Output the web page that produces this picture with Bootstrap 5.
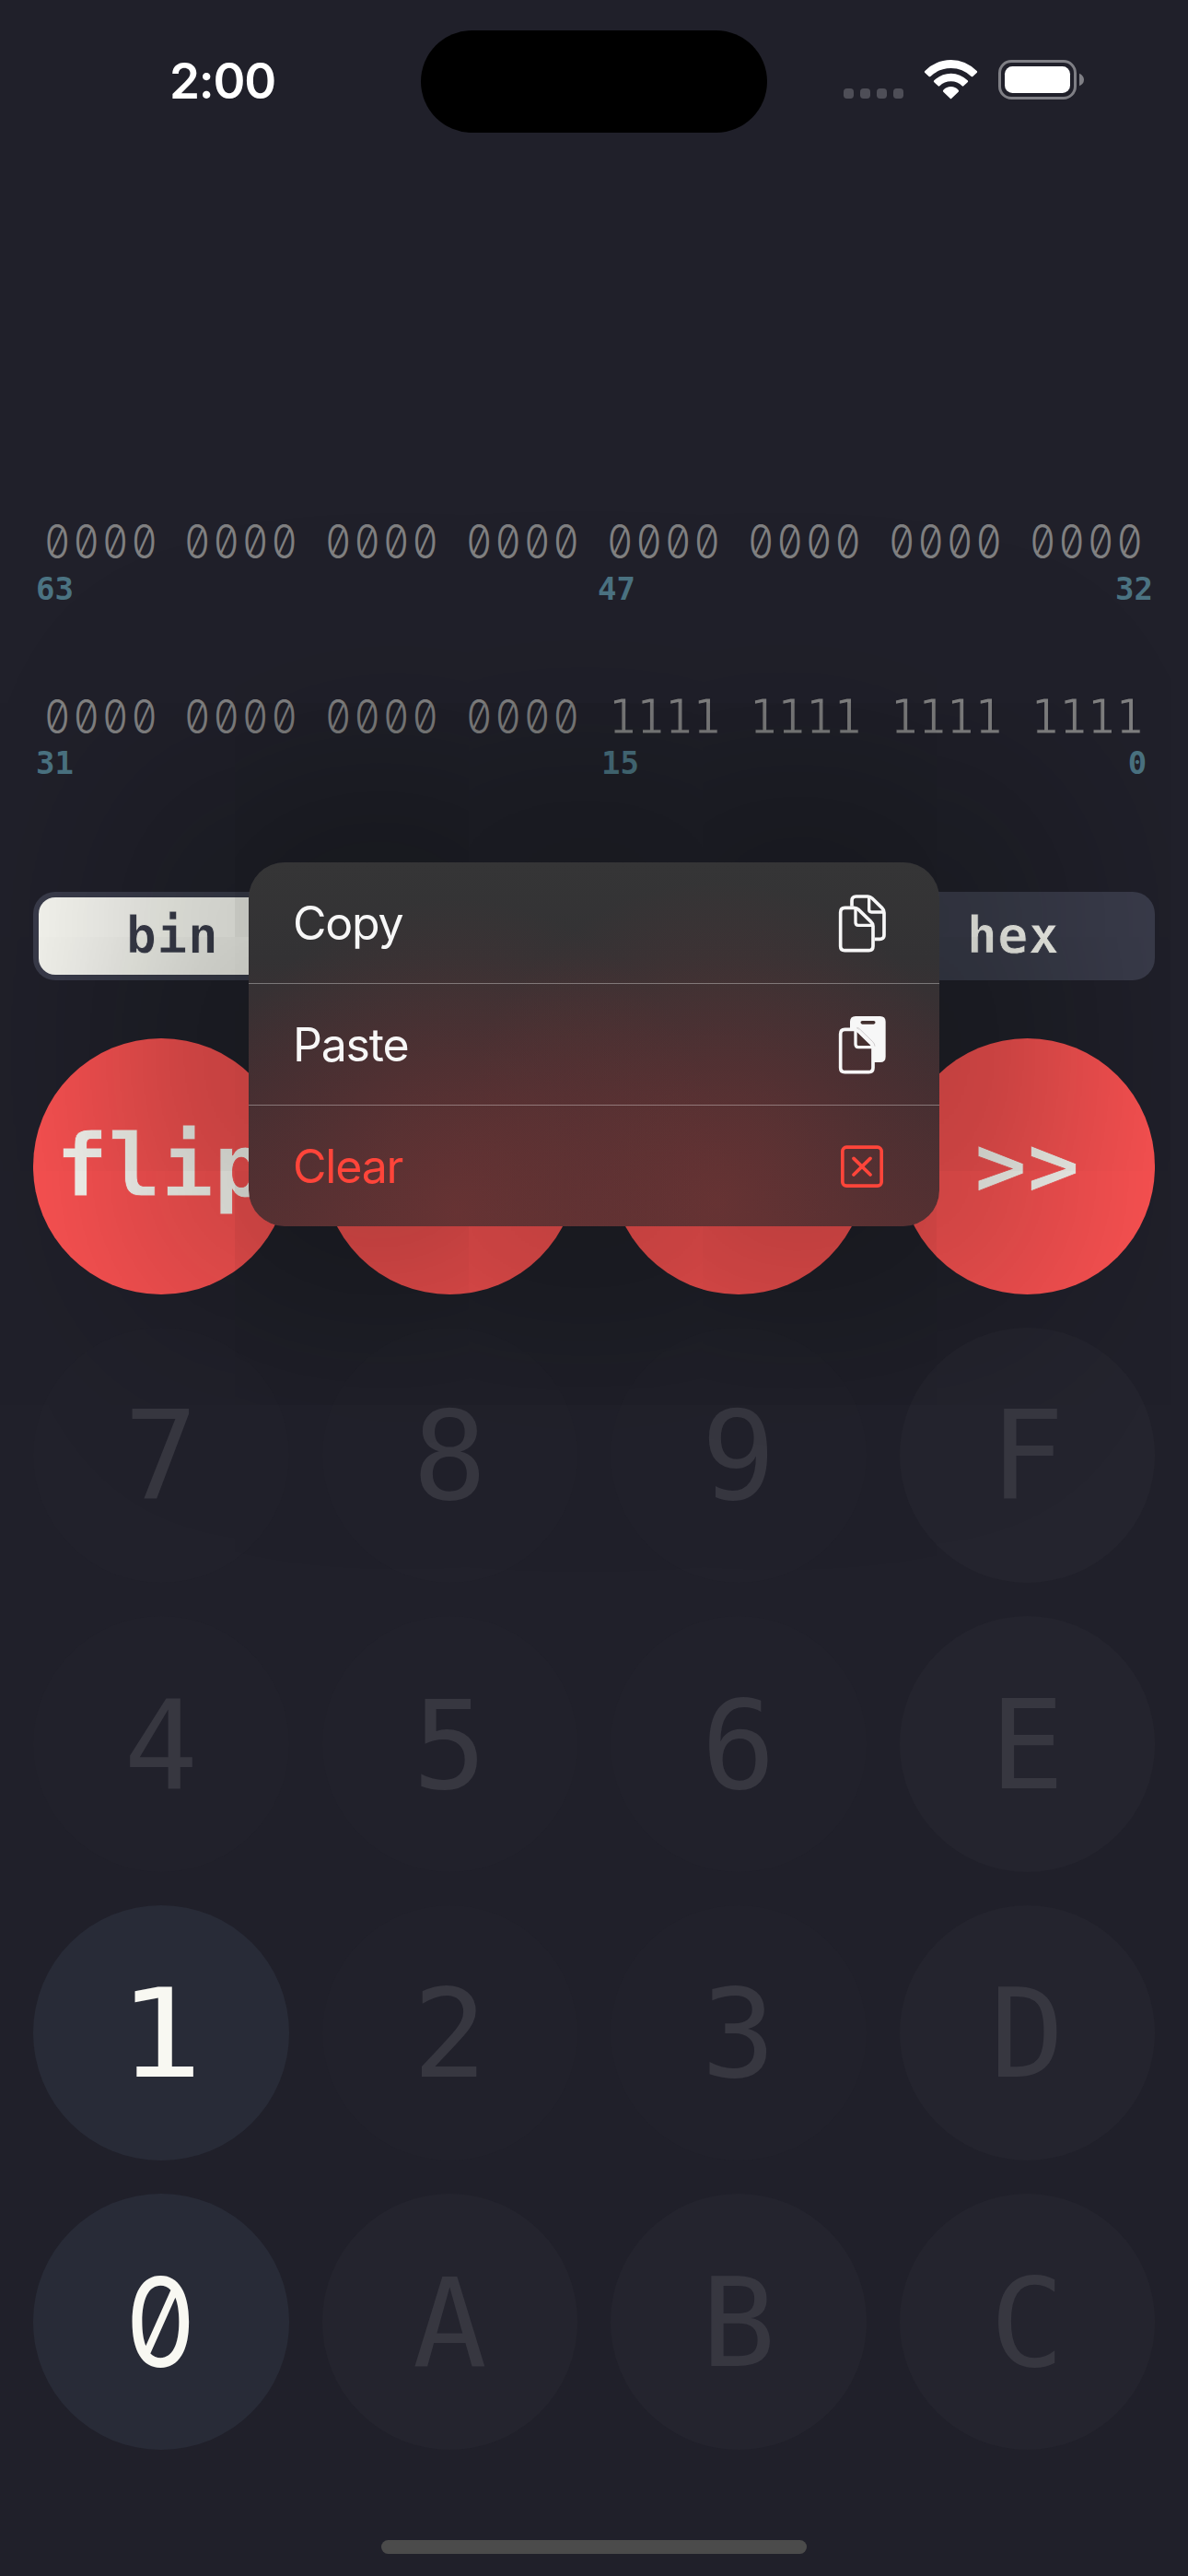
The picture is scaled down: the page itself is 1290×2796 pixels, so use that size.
<!DOCTYPE html>
<html lang="en">
<head>
<meta charset="utf-8">
<meta name="viewport" content="width=device-width, initial-scale=1">
<title>Programmer calculator</title>
<link href="https://cdn.jsdelivr.net/npm/bootstrap@5.3.0/dist/css/bootstrap.min.css" rel="stylesheet">
<style>
  :root { --page: #20202a; --ink: #f8f8f2; --red: #fb5252; }
  body { background: var(--page); font-family: Inter, "Liberation Sans", sans-serif; }
  .screen { width: 1290px; height: 2796px; }
  .mono { font-family: "DejaVu Sans Mono", "Liberation Mono", monospace; }

  .statusbar { height: 144px; padding-top: 33px; }
  .clock { width: 457px; padding: 25px 0 0 184px; font-size: 53px; line-height: 60px; font-weight: 600; letter-spacing: -1.2px; color: #fff; }
  .island { width: 376px; height: 111px; background: #000; }
  .indicators { padding-left: 83px; }

  .bits { height: 190px; padding: 0 39px; }
  .bits-digits { padding: 0 9.5px; font-size: 51px; line-height: 60px; color: #808081; }
  .nib { width: 122.4px; letter-spacing: -.1px; white-space: nowrap; -webkit-text-stroke: 1.1px var(--page); }
  /* slashed zeros, condensed to the monospace cell */
  .nib-zero { font-family: Inter, sans-serif; font-weight: 300; font-feature-settings: "zero", "tnum"; letter-spacing: 3.7px; line-height: 57px; transform: scaleX(.86); transform-origin: -8px 50%; -webkit-text-stroke: 0; }
  .bits-marks { font-size: 34px; line-height: 40px; font-weight: 700; color: #4b7382; margin-top: -1px; }
  .bits-marks span { width: 40px; }
  .display { padding-top: 415px; }

  .modes { height: 96px; margin: 29px 36px 63px; padding: 6px; border-radius: 24px; background: #3a3c4b; }
  .mode { width: 290px; font-size: 55px; line-height: 1; font-weight: 700; letter-spacing: .4px; color: var(--ink); border: 0; padding: 0 0 2px; -webkit-text-stroke: .8px #3a3c4b; }
  .mode-off { padding-right: 6px; }
  .mode-on { background: var(--ink); color: #3a3c4b; border-radius: 18px; -webkit-text-stroke-color: var(--ink); }

  .keypad { padding: 0 36px; gap: 36px; }
  .key { width: 277.5px; height: 277.5px; border: 0; padding: 4px 0 0; font-size: 134px; line-height: 1; color: #373740; background: #21212b; }
  .key-hex { background: #24242e; }
  .key-live { background: #282b37; color: var(--ink); }
  .key-live span { display: inline-block; transform: scaleX(1.14); }
  .key-live .zero { font-family: Inter, sans-serif; font-feature-settings: "zero", "tnum"; transform: scaleX(.9); }
  .key-op { background: var(--red); color: var(--ink); font-size: 95px; font-weight: 700; padding: 0 0 1px; -webkit-text-stroke: .8px var(--red); }

  .homebar { width: 462px; height: 15px; margin-top: 98px; background: #4b4b4b; }

  .ctx { left: 270px; top: 936px; width: 750px; height: 395px; border-radius: 39px; overflow: hidden;
    background:
      radial-gradient(ellipse 300px 340px at 225px 380px, rgba(110,52,52,.75), rgba(110,52,52,.3) 55%, rgba(110,52,52,0)),
      radial-gradient(ellipse 300px 350px at 510px 370px, rgba(110,52,52,.75), rgba(110,52,52,.3) 55%, rgba(110,52,52,0)),
      linear-gradient(#353536, #333234 26%, #402e31 60%, #502f31); }
  .ctx-shade { left: 270px; top: 936px; width: 750px; height: 395px; border-radius: 39px; box-shadow: 0 0 280px 100px rgba(0,8,4,.36); pointer-events: none; }
  .ctx-item { height: 132px; padding: 2px 51px 0 48px; font-size: 50px; letter-spacing: -1.2px; color: #f7f7f7; background: transparent; border: 0; border-bottom: 1px solid rgba(255,255,255,.34); border-radius: 0; }
  .ctx-item svg { margin-top: -2px; }
  .ctx-item:last-child { height: 131px; border-bottom: 0; color: #ff453a; }
</style>
</head>
<body>
<main class="screen position-relative overflow-hidden d-flex flex-column">
  <header class="statusbar d-flex">
    <div class="clock">2:00</div>
    <div class="island rounded-pill"></div>
    <div class="indicators">
      <svg width="262" height="111" viewBox="108 -21 786 333">
        <g fill="#4e4e57"><rect x="108" y="168" width="33" height="33" rx="11"/><rect x="162" y="168" width="33" height="33" rx="11"/><rect x="216" y="168" width="33" height="33" rx="11"/><rect x="270" y="168" width="33" height="33" rx="11"/></g>
        <g fill="#fff">
          <path d="M373 111Q410 75 458 75Q505 75 542 111Q545 114 542 117L529 129Q527 131 524 129Q496 102 458 102Q419 102 391 129Q388 131 386 129L373 117Q370 114 373 111Z"/>
          <path d="M403 142Q427 119 458 119Q488 119 512 142Q515 145 512 148L499 160Q497 162 494 160Q479 145 458 145Q436 145 421 160Q418 162 416 160L403 148Q400 145 403 142Z"/>
          <path d="M433 173Q443 162 458 162Q472 162 482 173Q485 176 482 179L460 200Q457 203 455 200L433 179Q430 176 433 173Z"/>
          <rect x="633" y="96" width="213" height="87" rx="25"/>
        </g>
        <rect x="616.500" y="79.500" width="246" height="120" rx="38" fill="none" stroke="#7f7f85" stroke-width="9"/>
        <path d="M876 119Q891 126 891 139.500Q891 153 876 160Z" fill="#7f7f85"/>
      </svg>
    </div>
  </header>

  <section class="display mono">
    <div class="bits">
      <div class="bits-digits d-flex justify-content-between"><span class="nib nib-zero">0000</span><span class="nib nib-zero">0000</span><span class="nib nib-zero">0000</span><span class="nib nib-zero">0000</span><span class="nib nib-zero">0000</span><span class="nib nib-zero">0000</span><span class="nib nib-zero">0000</span><span class="nib nib-zero">0000</span></div>
      <div class="bits-marks d-flex justify-content-between pt-1"><span>63</span><span class="ms-5">47</span><span>32</span></div>
    </div>
    <div class="bits">
      <div class="bits-digits d-flex justify-content-between"><span class="nib nib-zero">0000</span><span class="nib nib-zero">0000</span><span class="nib nib-zero">0000</span><span class="nib nib-zero">0000</span><span class="nib">1111</span><span class="nib">1111</span><span class="nib">1111</span><span class="nib">1111</span></div>
      <div class="bits-marks d-flex justify-content-between"><span>31</span><span class="ms-5 ps-1">15</span><span class="text-center ps-2">0</span></div>
    </div>
  </section>

  <div class="modes mono d-flex justify-content-between" role="group">
    <button class="btn mode mode-on">bin</button>
    <button class="btn mode mode-off">hex</button>
  </div>

  <section class="keypad mono d-flex flex-wrap">
    <button class="btn rounded-circle key key-op">flip</button>
    <button class="btn rounded-circle key key-op"></button>
    <button class="btn rounded-circle key key-op"></button>
    <button class="btn rounded-circle key key-op">&gt;&gt;</button>
    <button class="btn rounded-circle key">7</button>
    <button class="btn rounded-circle key">8</button>
    <button class="btn rounded-circle key">9</button>
    <button class="btn rounded-circle key key-hex">F</button>
    <button class="btn rounded-circle key">4</button>
    <button class="btn rounded-circle key">5</button>
    <button class="btn rounded-circle key">6</button>
    <button class="btn rounded-circle key key-hex">E</button>
    <button class="btn rounded-circle key key-live"><span>1</span></button>
    <button class="btn rounded-circle key">2</button>
    <button class="btn rounded-circle key">3</button>
    <button class="btn rounded-circle key key-hex">D</button>
    <button class="btn rounded-circle key key-live"><span class="zero">0</span></button>
    <button class="btn rounded-circle key key-hex">A</button>
    <button class="btn rounded-circle key key-hex">B</button>
    <button class="btn rounded-circle key key-hex">C</button>
  </section>

  <div class="homebar rounded-pill mx-auto"></div>

  <div class="ctx-shade position-absolute"></div>
  <div class="ctx position-absolute d-flex flex-column">
    <button class="ctx-item d-flex justify-content-between align-items-center">Copy
      <svg width="60" height="64" viewBox="87 58 180 192" fill="none" stroke="#f7f7f7" stroke-width="11" stroke-linejoin="round">
        <path d="M135 99V81Q135 67 149 67H187Q195 67 201 73L233 104Q240 111 240 120V192Q240 206 226 206H209"/>
        <path d="M191 68V110Q191 118 199 118H238" stroke-width="10"/>
        <path d="M98 119Q98 104 112 104H142Q151 104 157 110L197 149Q204 155 204 164V229Q204 243 190 243H112Q98 243 98 229Z"/>
        <path d="M147 105V152Q147 161 156 161H203" stroke-width="10"/>
      </svg>
    </button>
    <button class="ctx-item d-flex justify-content-between align-items-center">Paste
      <svg width="60" height="64" viewBox="87 454 180 192" fill="none" stroke="#f7f7f7" stroke-width="11" stroke-linejoin="round">
        <path fill="#f7f7f7" stroke="none" d="M129 496V475Q129 457 147 457H227Q245 457 245 475V589Q245 607 227 607H207V552L155 498Z"/>
        <path d="M169 477.500H206" stroke="#43302f" stroke-linecap="round"/>
        <path d="M98 515Q98 500 112 500H142Q151 500 157 506L197 545Q204 551 204 560V625Q204 639 190 639H112Q98 639 98 625Z"/>
        <path fill="#46302f" stroke="none" d="M153 512L192 552H157Q153 552 153 548Z"/>
        <path d="M147 501V548Q147 558 156 558H203" stroke-width="10"/>
        <path d="M151 494Q158 495 163 501L203 540Q210 547 210 555" stroke="#b9b5b6" stroke-width="2"/>
      </svg>
    </button>
    <button class="ctx-item d-flex justify-content-between align-items-center">Clear
      <svg width="60" height="64" viewBox="87 852 180 192" fill="none" stroke="#ff453a" stroke-width="11">
        <rect x="104.500" y="885.500" width="127" height="126" rx="13"/>
        <path d="M141 922L195 975M195 922L141 975" stroke-linecap="round"/>
      </svg>
    </button>
  </div>
</main>
<script src="https://cdn.jsdelivr.net/npm/bootstrap@5.3.0/dist/js/bootstrap.bundle.min.js"></script>
</body>
</html>
